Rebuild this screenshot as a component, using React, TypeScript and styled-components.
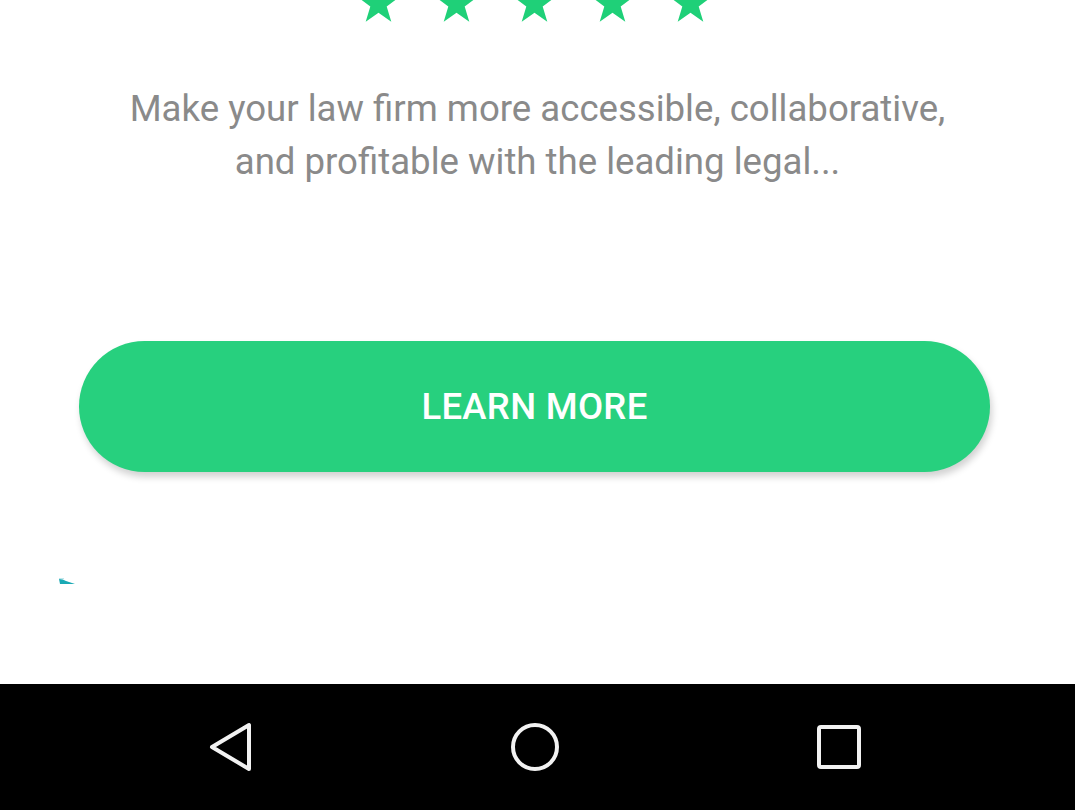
import React from "react";
import styled, { createGlobalStyle } from "styled-components";

const Global = createGlobalStyle`
  html, body { margin: 0; padding: 0; background: #ffffff; }
  body { font-family: Roboto, "Noto Sans", Arial, sans-serif; overflow: hidden; }
`;

const Page = styled.div`
  width: 1075px;
  height: 810px;
  display: flex;
  flex-direction: column;
  background: #ffffff;
`;

const Content = styled.main`
  height: 684px;
  display: flex;
  flex-direction: column;
  align-items: stretch;
`;

const StarsRow = styled.div`
  height: 25px;
  overflow: hidden;
  display: flex;
  justify-content: center;
  align-items: flex-end;
  gap: 35px;
  padding-right: 6px;
`;

const StarSvg = styled.svg`
  width: 43px;
  height: 42px;
  flex: none;
  display: block;
`;

const Tagline = styled.p`
  margin: 57px 0 0;
  text-align: center;
  font-size: 36.6px;
  line-height: 53px;
  color: #8a8a8a;
  font-weight: 400;
`;

const LearnButton = styled.button`
  margin: 153px 0 0 79px;
  width: 911px;
  height: 131px;
  border: none;
  border-radius: 66px;
  background: #27d07e;
  color: #ffffff;
  font-family: Roboto, Arial, sans-serif;
  font-weight: 500;
  font-size: 36.5px;
  letter-spacing: 0.3px;
  box-shadow: 2px 5px 7px rgba(0, 0, 0, 0.18);
  cursor: pointer;
  padding: 0;
`;

const SpinnerArea = styled.div`
  margin: 99px 0 0 57px;
  width: 22px;
  height: 8px;
`;

const NavBar = styled.nav`
  height: 126px;
  background: #000000;
  display: flex;
  justify-content: center;
  align-items: center;
  gap: 256px;
  padding-right: 6px;
`;

const NavIcon = styled.svg`
  width: 48px;
  height: 52px;
  display: block;
`;

const Star = () => (
  <StarSvg viewBox="0 0 41 40">
    <polygon
      fill="#1fd078"
      points="20.5,0 25.3,13.4 40,13.6 28.3,22.4 32.7,37 20.5,28.4 8.3,37 12.7,22.4 1,13.6 15.7,13.4"
    />
  </StarSvg>
);

export default function App() {
  return (
    <>
      <Global />
      <Page>
        <Content>
          <StarsRow>
            <Star />
            <Star />
            <Star />
            <Star />
            <Star />
          </StarsRow>
          <Tagline>
            Make your law firm more accessible, collaborative,
            <br />
            and profitable with the leading legal...
          </Tagline>
          <LearnButton>LEARN MORE</LearnButton>
          <SpinnerArea>
            <svg width="22" height="8" viewBox="0 0 22 8">
              <path d="M2 1 Q6 1 9 3 L18 6 L3 6 Z" fill="#1aa9b4" />
              <path d="M2 0 L7 0 L7 1 L2 1 Z" fill="#bfe6ea" />
            </svg>
          </SpinnerArea>
        </Content>
        <NavBar>
          <NavIcon viewBox="0 0 48 52">
            <path
              d="M5 26 L42 4 L42 48 Z"
              fill="none"
              stroke="#f2f2f2"
              strokeWidth="4"
              strokeLinejoin="round"
            />
          </NavIcon>
          <NavIcon viewBox="0 0 48 52">
            <circle cx="24" cy="26" r="22" fill="none" stroke="#f2f2f2" strokeWidth="4" />
          </NavIcon>
          <NavIcon viewBox="0 0 48 52">
            <rect x="4" y="6" width="40" height="40" rx="2" fill="none" stroke="#f2f2f2" strokeWidth="4" />
          </NavIcon>
        </NavBar>
      </Page>
    </>
  );
}
